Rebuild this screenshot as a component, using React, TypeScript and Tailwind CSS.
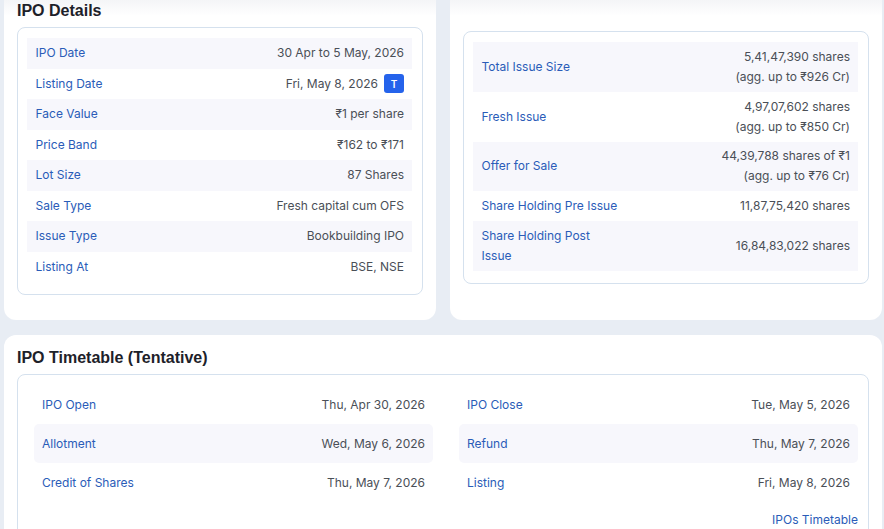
import React from 'react';

const details = [
  ['IPO Date', '30 Apr to 5 May, 2026'],
  ['Listing Date', 'Fri, May 8, 2026'],
  ['Face Value', '₹1 per share'],
  ['Price Band', '₹162 to ₹171'],
  ['Lot Size', '87 Shares'],
  ['Sale Type', 'Fresh capital cum OFS'],
  ['Issue Type', 'Bookbuilding IPO'],
  ['Listing At', 'BSE, NSE'],
];

const issue = [
  { label: 'Total Issue Size', lines: ['5,41,47,390 shares', '(agg. up to ₹926 Cr)'] },
  { label: 'Fresh Issue', lines: ['4,97,07,602 shares', '(agg. up to ₹850 Cr)'] },
  { label: 'Offer for Sale', lines: ['44,39,788 shares of ₹1', '(agg. up to ₹76 Cr)'] },
  { label: 'Share Holding Pre Issue', lines: ['11,87,75,420 shares'] },
  { label: 'Share Holding Post Issue', lines: ['16,84,83,022 shares'] },
];

const timetable = [
  [['IPO Open', 'Thu, Apr 30, 2026'], ['IPO Close', 'Tue, May 5, 2026']],
  [['Allotment', 'Wed, May 6, 2026'], ['Refund', 'Thu, May 7, 2026']],
  [['Credit of Shares', 'Thu, May 7, 2026'], ['Listing', 'Fri, May 8, 2026']],
];

export default function App() {
  return (
    <div className="h-[529px] w-[884px] overflow-hidden bg-[#e8edf4] font-['Inter',sans-serif] text-[12px] leading-[20px] text-[#4a4f57]">
      <div className="-mt-[20px] flex flex-col gap-[15px] pl-[4px] pr-[2px]">
        <div className="flex gap-[14px]">
          <div className="h-[340px] w-[432px] rounded-b-[12px] bg-[linear-gradient(#f4f5f7_20px,#ffffff_36px)] px-[13px] pt-[20px]">
            <h2 className="pt-[1px] font-['Liberation_Sans',sans-serif] text-[16px] leading-[20px] font-bold text-[#1d2129]">IPO Details</h2>
            <div className="mt-[6px] h-[268px] rounded-[8px] border border-[#d5e1ee] pt-[10px] pr-[10px] pl-[9px]">
              {details.map(([label, value], i) => (
                <div
                  key={label}
                  className={`flex h-[30.5px] items-center justify-between pr-[8px] pl-[8.5px] ${i % 2 === 0 ? 'bg-[#f7f7fc]' : ''}`}
                >
                  <span className="text-[#2a5cb8]">{label}</span>
                  <span className="flex items-center gap-[6px]">
                    {value}
                    {label === 'Listing Date' && (
                      <span className="flex h-[19px] w-[20px] items-center justify-center rounded-[3px] bg-[#2563eb] text-[10px] font-semibold text-white">
                        T
                      </span>
                    )}
                  </span>
                </div>
              ))}
            </div>
          </div>
          <div className="h-[340px] w-[432px] rounded-b-[12px] bg-[linear-gradient(#f4f5f7_20px,#ffffff_36px)] px-[13px] pt-[51px]">
            <div className="h-[253px] rounded-[8px] border border-[#d5e1ee] pt-[10px] pr-[10px] pl-[9px]">
              {issue.map((row, i) => (
                <div
                  key={row.label}
                  className={`flex items-center justify-between pr-[8px] pl-[8.5px] ${i === 3 ? 'h-[30px]' : 'h-[49.8px]'} ${i % 2 === 0 ? 'bg-[#f7f7fc]' : ''}`}
                >
                  <span className="w-[140px] text-[#2a5cb8]">{row.label}</span>
                  <span className="text-right">
                    {row.lines.map((line) => (
                      <div key={line}>{line}</div>
                    ))}
                  </span>
                </div>
              ))}
            </div>
          </div>
        </div>
        <div className="h-[300px] w-[878px] rounded-t-[12px] bg-white px-[13px] pt-[12px]">
          <h2 className="pt-[1px] font-['Liberation_Sans',sans-serif] text-[16px] leading-[20px] font-bold text-[#1d2129]">IPO Timetable (Tentative)</h2>
          <div className="mt-[6px] h-[200px] rounded-[8px] border border-[#d5e1ee] pt-[10px] pr-[10px] pl-[16px]">
            <div className="flex flex-col">
              {timetable.map((row, i) => (
                <div key={i} className="grid grid-cols-2 gap-[26px]">
                  {row.map(([label, value]) => (
                    <div
                      key={label}
                      className={`flex h-[39px] items-center justify-between rounded-[5px] px-[8px] ${i === 1 ? 'bg-[#f7f7fc]' : ''}`}
                    >
                      <span className="text-[#2a5cb8]">{label}</span>
                      <span>{value}</span>
                    </div>
                  ))}
                </div>
              ))}
            </div>
            <div className="mt-[8px] text-right text-[#2a5cb8]">IPOs Timetable</div>
          </div>
        </div>
      </div>
    </div>
  );
}
